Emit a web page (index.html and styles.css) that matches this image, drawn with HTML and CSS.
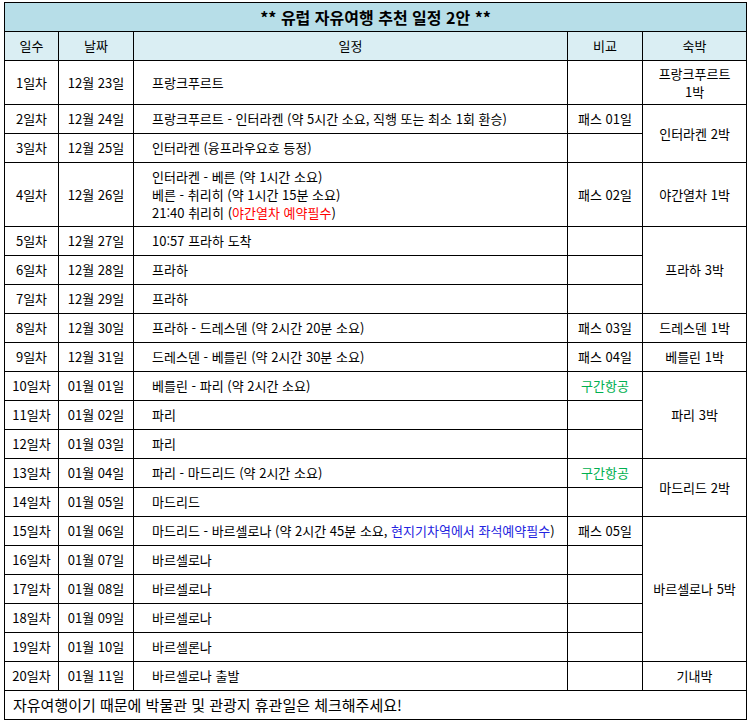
FILE: index.html
```html
<!DOCTYPE html>
<html lang="ko">
<head>
<meta charset="utf-8">
<title>유럽 자유여행 추천 일정 2안</title>
<link rel="stylesheet" href="styles.css">
</head>
<body>
<table class="plan">
  <colgroup>
    <col class="c-day"><col class="c-date"><col class="c-sched"><col class="c-note"><col class="c-stay">
  </colgroup>
  <tr class="title-row"><td colspan="5" class="title">** 유럽 자유여행 추천 일정 2안 **</td></tr>
  <tr class="head-row"><th>일수</th><th>날짜</th><th>일정</th><th>비교</th><th>숙박</th></tr>
  <tr class="tall2"><td class="ctr">1일차</td><td class="ctr">12월 23일</td><td class="sched">프랑크푸르트</td><td></td><td class="ctr">프랑크푸르트<br>1박</td></tr>
  <tr><td class="ctr">2일차</td><td class="ctr">12월 24일</td><td class="sched">프랑크푸르트 - 인터라켄 (약 5시간 소요, 직행 또는 최소 1회 환승)</td><td class="ctr">패스 01일</td><td class="ctr" rowspan="2">인터라켄 2박</td></tr>
  <tr><td class="ctr">3일차</td><td class="ctr">12월 25일</td><td class="sched">인터라켄 (융프라우요호 등정)</td><td></td></tr>
  <tr class="tall3"><td class="ctr">4일차</td><td class="ctr">12월 26일</td><td class="sched">인터라켄 - 베른 (약 1시간 소요)<br>베른 - 취리히 (약 1시간 15분 소요)<br>21:40 취리히 (<span class="red">야간열차 예약필수</span>)</td><td class="ctr">패스 02일</td><td class="ctr">야간열차 1박</td></tr>
  <tr><td class="ctr">5일차</td><td class="ctr">12월 27일</td><td class="sched">10:57 프라하 도착</td><td></td><td class="ctr" rowspan="3">프라하 3박</td></tr>
  <tr><td class="ctr">6일차</td><td class="ctr">12월 28일</td><td class="sched">프라하</td><td></td></tr>
  <tr><td class="ctr">7일차</td><td class="ctr">12월 29일</td><td class="sched">프라하</td><td></td></tr>
  <tr><td class="ctr">8일차</td><td class="ctr">12월 30일</td><td class="sched">프라하 - 드레스덴 (약 2시간 20분 소요)</td><td class="ctr">패스 03일</td><td class="ctr">드레스덴 1박</td></tr>
  <tr><td class="ctr">9일차</td><td class="ctr">12월 31일</td><td class="sched">드레스덴 - 베를린 (약 2시간 30분 소요)</td><td class="ctr">패스 04일</td><td class="ctr">베를린 1박</td></tr>
  <tr><td class="ctr">10일차</td><td class="ctr">01월 01일</td><td class="sched">베를린 - 파리 (약 2시간 소요)</td><td class="ctr green">구간항공</td><td class="ctr" rowspan="3">파리 3박</td></tr>
  <tr><td class="ctr">11일차</td><td class="ctr">01월 02일</td><td class="sched">파리</td><td></td></tr>
  <tr><td class="ctr">12일차</td><td class="ctr">01월 03일</td><td class="sched">파리</td><td></td></tr>
  <tr><td class="ctr">13일차</td><td class="ctr">01월 04일</td><td class="sched">파리 - 마드리드 (약 2시간 소요)</td><td class="ctr green">구간항공</td><td class="ctr" rowspan="2">마드리드 2박</td></tr>
  <tr><td class="ctr">14일차</td><td class="ctr">01월 05일</td><td class="sched">마드리드</td><td></td></tr>
  <tr><td class="ctr">15일차</td><td class="ctr">01월 06일</td><td class="sched">마드리드 - 바르셀로나 (약 2시간 45분 소요, <span class="blue">현지기차역에서 좌석예약필수</span>)</td><td class="ctr">패스 05일</td><td class="ctr" rowspan="5">바르셀로나 5박</td></tr>
  <tr><td class="ctr">16일차</td><td class="ctr">01월 07일</td><td class="sched">바르셀로나</td><td></td></tr>
  <tr><td class="ctr">17일차</td><td class="ctr">01월 08일</td><td class="sched">바르셀로나</td><td></td></tr>
  <tr><td class="ctr">18일차</td><td class="ctr">01월 09일</td><td class="sched">바르셀로나</td><td></td></tr>
  <tr><td class="ctr">19일차</td><td class="ctr">01월 10일</td><td class="sched">바르셀론나</td><td></td></tr>
  <tr><td class="ctr">20일차</td><td class="ctr">01월 11일</td><td class="sched">바르셀로나 출발</td><td></td><td class="ctr">기내박</td></tr>
  <tr><td colspan="5" class="foot">자유여행이기 때문에 박물관 및 관광지 휴관일은 체크해주세요!</td></tr>
</table>
</body>
</html>
```
FILE: styles.css
```css
html, body {
  margin: 0;
  padding: 0;
  background: #ffffff;
}
body {
  padding: 2px 0 0 4px;
  font-family: "Noto Sans CJK KR", "Noto Sans", sans-serif;
  font-size: 13px;
  color: #000000;
}
.plan {
  border-collapse: collapse;
  table-layout: fixed;
  width: 742px;
}
.c-day { width: 54px; }
.c-date { width: 75px; }
.c-sched { width: 434px; }
.c-note { width: 75px; }
.c-stay { width: 104px; }
.plan td, .plan th {
  border: 1px solid #000000;
  padding: 0;
  height: 28px;
  line-height: 18px;
  vertical-align: middle;
  white-space: nowrap;
}
.title {
  background: #b7dee8;
  text-align: center;
  font-weight: bold;
  font-size: 16px;
}
.plan th {
  background: #daeef3;
  font-weight: normal;
  text-align: center;
}
.tall2 td { height: 43px; }
.tall3 td { height: 63px; }
.ctr { text-align: center; }
.sched { padding-left: 18px !important; text-align: left; }
.red { color: #ff0000; }
.blue { color: #2323e0; }
.green { color: #00b050; }
.foot {
  font-size: 15px;
  padding-left: 8px !important;
  text-align: left;
}
```
